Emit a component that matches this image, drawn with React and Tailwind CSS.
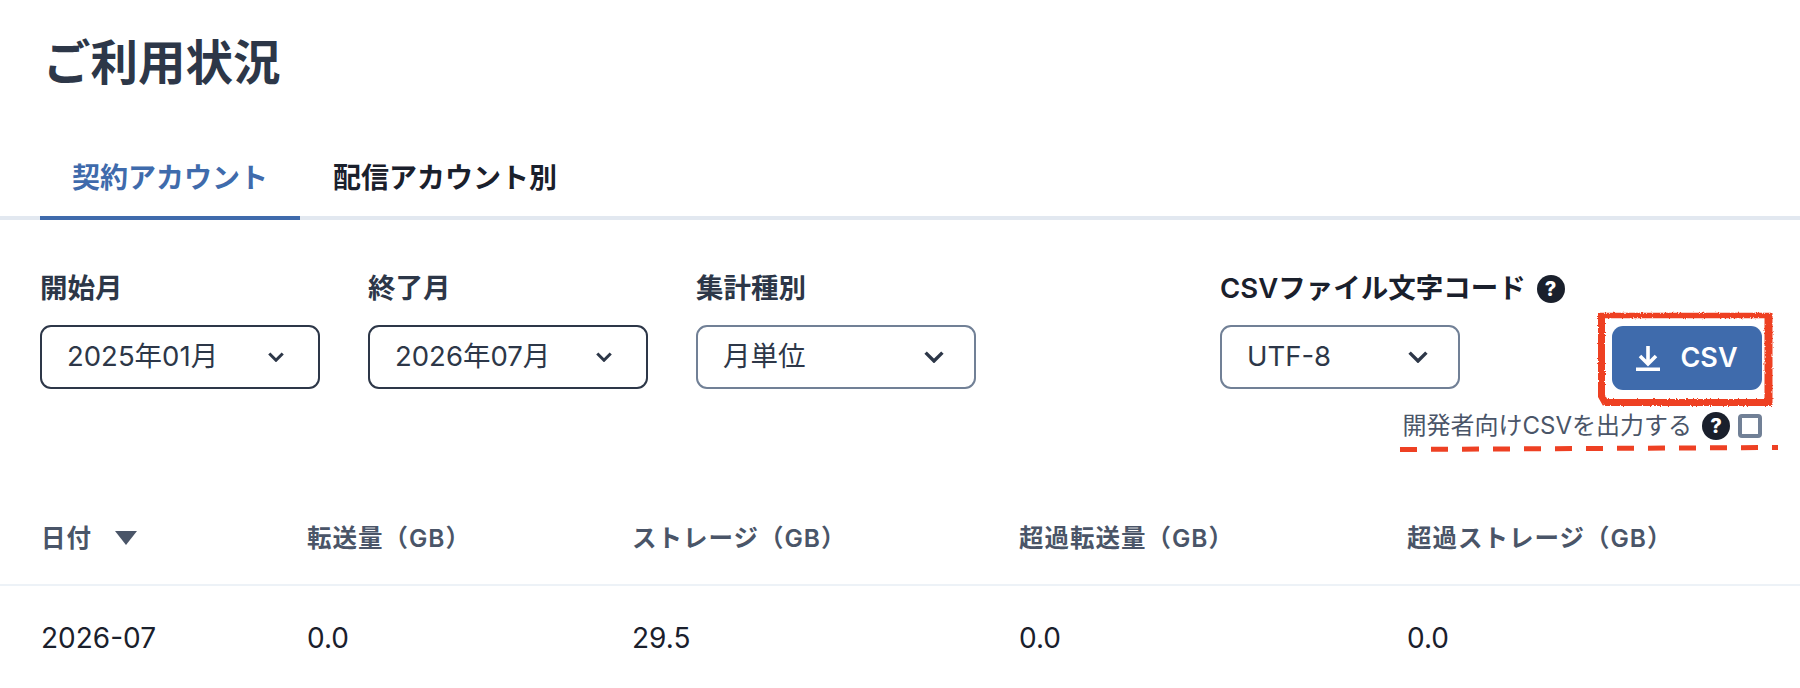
import { useId } from "react";

const filters = [
  { label: "開始月", value: "2025年01月", tone: "dark", chevron: "small" },
  { label: "終了月", value: "2026年07月", tone: "dark", chevron: "small" },
  { label: "集計種別", value: "月単位", tone: "muted", chevron: "large" },
];

const columns = [
  { title: "日付", value: "2026-07", sorted: true },
  { title: "転送量（GB）", value: "0.0" },
  { title: "ストレージ（GB）", value: "29.5" },
  { title: "超過転送量（GB）", value: "0.0" },
  { title: "超過ストレージ（GB）", value: "0.0" },
];

function Chevron({ large }) {
  return (
    <svg
      viewBox="0 0 20 12"
      className={large ? "w-[20px] h-[12px] text-[#2d3748]" : "w-[16px] h-[10px] text-[#2d3748]"}
      fill="none"
      stroke="currentColor"
      strokeWidth={large ? 3.4 : 3.8}
    >
      <path d="M1.6 1.6 10 10 18.4 1.6" />
    </svg>
  );
}

function Select({ value, tone, width = "w-[280px]", chevron }) {
  const border = tone === "dark" ? "border-[#2d3748]" : "border-[#718096]";
  const pad = chevron === "large" ? "pr-[30px]" : "pr-[34px]";
  return (
    <div className={`${width} ${border} ${pad} h-[64px] -mt-px flex items-center justify-between pl-[25px] border-2 rounded-[11px] text-[27.5px] text-[#2d3748]`}>
      <span>{value}</span>
      <Chevron large={chevron === "large"} />
    </div>
  );
}

function Help() {
  return (
    <span className="w-[28px] h-[28px] rounded-full bg-[#1a202c] text-white text-[20px] font-extrabold leading-none flex items-center justify-center">
      ?
    </span>
  );
}

function Annotations() {
  const id = useId().replace(/:/g, "");
  return (
    <svg className="absolute left-0 top-0 w-[1800px] h-[688px] pointer-events-none" viewBox="0 0 1800 688" fill="none" stroke="#ee4023">
      <defs>
        <filter id={id} x="-5%" y="-5%" width="110%" height="110%">
          <feTurbulence type="fractalNoise" baseFrequency="0.6" numOctaves="2" seed="4" />
          <feDisplacementMap in="SourceGraphic" scale="3" />
        </filter>
      </defs>
      <g filter={`url(#${id})`}>
        <path d="M1600 315.5H1771" strokeWidth="5.5" />
        <path d="M1768.5 313V405" strokeWidth="8" />
        <path d="M1771 402.5H1605" strokeWidth="7" />
        <path d="M1601.5 313V396L1606 404" strokeWidth="7" />
      </g>
      <path d="M1400 449.5L1778 447.5" strokeWidth="5" strokeDasharray="17 14" />
    </svg>
  );
}

export default function App() {
  return (
    <div className="relative w-[1800px] h-[688px] overflow-hidden bg-white text-[#1a202c] font-['Inter','Noto_Sans_CJK_JP',sans-serif]">
      <h1 className="pl-[43px] pt-[33px] h-[140px] text-[47.5px] leading-[60px] font-semibold text-[#2d3748]">ご利用状況</h1>

      {/* Tabs */}
      <div className="h-[80px] pl-[40px] flex border-b-4 border-[#e2e8f0]">
        <div className="w-[260px] -mb-[4px] border-b-4 border-[#3f6bac] flex items-center justify-center text-[28px] font-semibold text-[#3f6bac]">
          契約アカウント
        </div>
        <div className="px-[33px] flex items-center text-[28px] font-semibold text-[#1a202c]">配信アカウント別</div>
      </div>

      {/* Filters */}
      <div className="pl-[40px] pr-[38px] pt-[50px] flex items-start">
        {filters.map((f) => (
          <div key={f.label} className="mr-[48px]">
            <div className="h-[38px] mb-[18px] flex items-center text-[27.5px] font-semibold text-[#2d3748]">{f.label}</div>
            <Select {...f} />
          </div>
        ))}
        <div className="ml-[196px]">
          <div className="h-[38px] mb-[18px] flex items-center gap-[11px] whitespace-nowrap text-[27.5px] font-semibold text-[#1a202c]">
            CSVファイル文字コード
            <Help />
          </div>
          <Select value="UTF-8" tone="muted" width="w-[240px]" chevron="large" />
        </div>
        <div className="ml-auto w-[150px] shrink-0 pt-[56px] flex flex-col items-end">
          <button className="w-[150px] h-[64px] rounded-[11px] bg-[#3f6bac] text-white flex items-center justify-center gap-[20px] text-[27px] font-semibold">
            <svg viewBox="0 0 24 25" className="w-[24px] h-[25px]" fill="none" stroke="currentColor" strokeWidth="3.6">
              <path d="M12 0V17M4 10l8 8 8-8M0 23.2H24" />
            </svg>
            CSV
          </button>
          <div className="mt-[22px] h-[28px] flex items-center shrink-0 whitespace-nowrap text-[24px] text-[#4a5568]">
            開発者向けCSVを出力する
            <span className="ml-[10px]"><Help /></span>
            <span className="ml-[8px] w-[24px] h-[24px] rounded-[4px] border-4 border-[#718096]" />
          </div>
        </div>
      </div>

      {/* Table */}
      <div className="mt-[66px]">
        <div className="h-[80px] pb-[14px] pl-[41px] grid grid-cols-[266px_325px_387px_388px_1fr] items-center border-b-2 border-[#edf2f7] text-[24.5px] font-semibold tracking-[1px] text-[#4a5568]">
          {columns.map((c) => (
            <div key={c.title} className="flex items-center">
              {c.title}
              {c.sorted && (
                <svg viewBox="0 0 22 14" className="ml-[23px] w-[22px] h-[14px] fill-[#4a5568]">
                  <path d="M0 0H22L11 14Z" />
                </svg>
              )}
            </div>
          ))}
        </div>
        <div className="h-[104px] pl-[41px] grid grid-cols-[266px_325px_387px_388px_1fr] items-center text-[28px] text-[#1a202c]">
          {columns.map((c) => (
            <div key={c.title}>{c.value}</div>
          ))}
        </div>
      </div>

      <Annotations />
    </div>
  );
}
